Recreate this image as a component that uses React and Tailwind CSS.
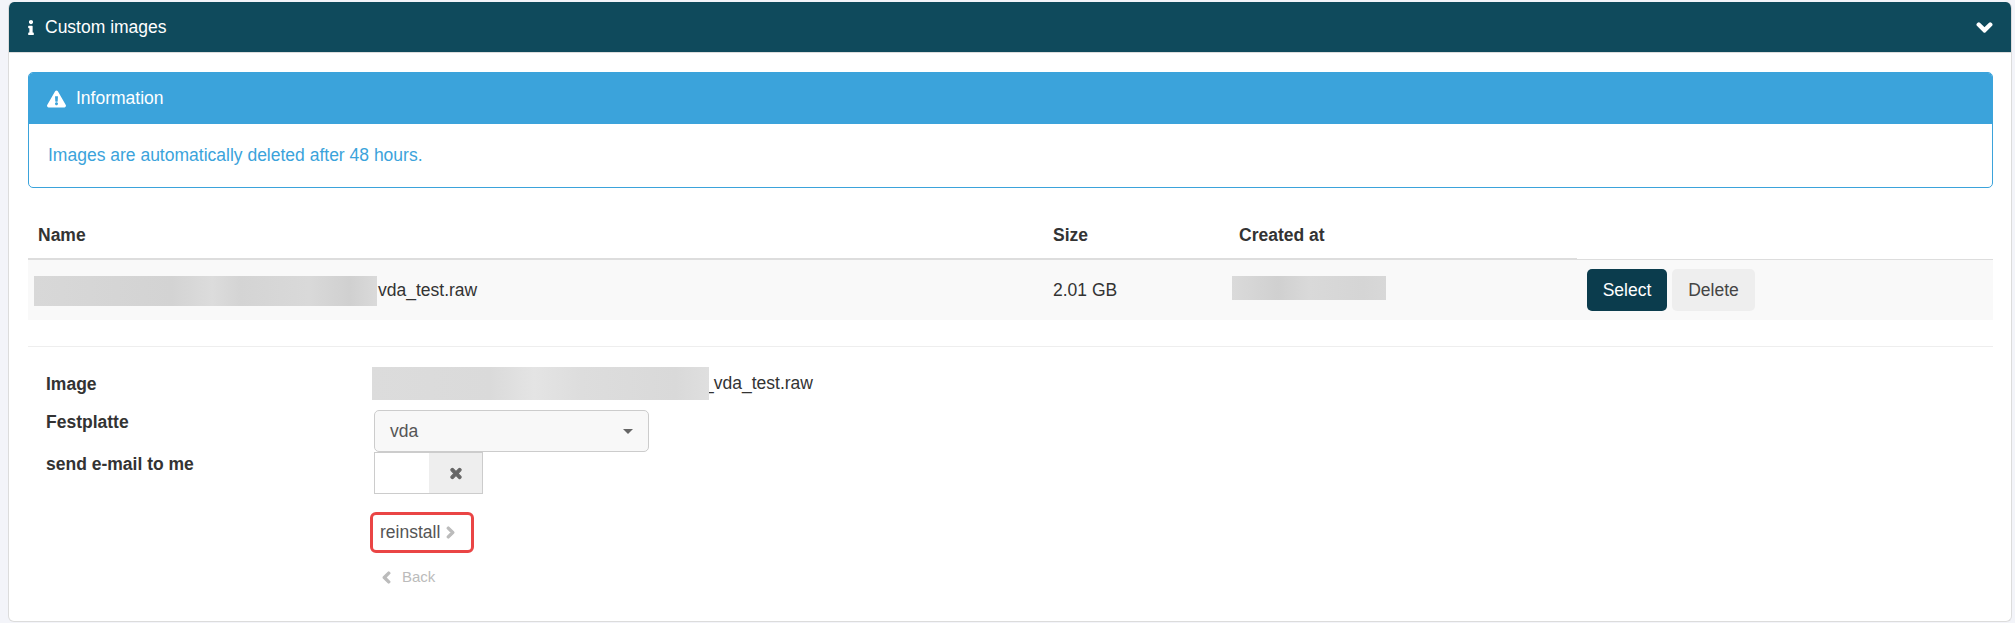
import React from 'react'
import { FaChevronDown, FaChevronLeft, FaChevronRight, FaExclamationTriangle, FaInfo, FaTimes } from 'react-icons/fa'

function App() {
  return (
    <div className="h-[623px] overflow-hidden bg-[#f3f4f9] pt-[2px] pr-[3px] pl-[8px] font-['Liberation_Sans',Arial,sans-serif] text-[17.5px] text-[#333]">
      <div className="h-[620px] overflow-hidden rounded-[6px] border-r border-b border-l border-[#dcdcdc] bg-white">
        {/* Panel header */}
        <div className="flex h-[51px] items-center justify-between border-b border-[#ddd] bg-[#0f4a5c] pr-[18px] pl-[18px] text-white">
          <div className="flex items-center">
            <FaInfo className="mr-[10px] h-[15px] w-[8px]" />
            <span>Custom images</span>
          </div>
          <FaChevronDown className="h-[17px] w-[17px]" stroke="currentColor" strokeWidth={50} />
        </div>

        <div className="pt-[19px] pr-[18px] pl-[19px]">
          {/* Information box */}
          <div className="overflow-hidden rounded-[5px] border border-[#3ba3db]">
            <div className="flex h-[51px] items-center bg-[#3ba3db] pl-[18px] text-white">
              <FaExclamationTriangle className="mr-[10px] h-[18px] w-[19px]" />
              <span>Information</span>
            </div>
            <div className="flex h-[63px] items-center pl-[19px] text-[#3ba3db]">
              Images are automatically deleted after 48 hours.
            </div>
          </div>

          {/* Images table */}
          <table className="mt-[23px] w-full table-fixed border-collapse">
            <thead>
              <tr className="h-[48px] text-left">
                <th className="w-[1015px] border-b-2 border-[#ddd] pt-[2px] pl-[10px] font-bold">Name</th>
                <th className="w-[187px] border-b-2 border-[#ddd] pt-[2px] pl-[10px] font-bold">Size</th>
                <th className="w-[347px] border-b-2 border-[#ddd] pt-[2px] pl-[9px] font-bold">Created at</th>
                <th className="border-b border-[#ddd]"></th>
              </tr>
            </thead>
            <tbody>
              <tr className="h-[61px] bg-[#f9f9f9]">
                <td className="pl-[6px]">
                  <div className="flex items-center">
                    <div className="mt-[2px] h-[30px] w-[343px] bg-[linear-gradient(90deg,#d8d8d8,#d3d3d3_40%,#dcdcdc_52%,#d4d4d4_60%,#d9d9d9_80%,#d0d0d0_92%,#dadada)]"></div>
                    <span className="pl-[1px]">vda_test.raw</span>
                  </div>
                </td>
                <td className="pl-[10px]">2.01 GB</td>
                <td className="pl-[2px]">
                  <div className="mb-[5px] h-[24px] w-[154px] bg-[linear-gradient(90deg,#dadada,#d0d0d0_30%,#d9d9d9_50%,#d5d5d5_85%,#d8d8d8)]"></div>
                </td>
                <td className="pl-[10px]">
                  <div className="flex gap-[5px]">
                    <button className="h-[42px] w-[80px] rounded-[5px] bg-[#0b3c4d] text-white">Select</button>
                    <button className="h-[42px] w-[83px] rounded-[5px] bg-[#eee] text-[#444]">Delete</button>
                  </div>
                </td>
              </tr>
            </tbody>
          </table>

          <div className="mt-[26px] border-t border-[#eee]"></div>

          {/* Reinstall form */}
          <div className="grid grid-cols-[328px_1fr] pt-[20px] pl-[18px]">
            <div className="flex flex-col pt-[4px] font-bold">
              <span className="h-[38px]">Image</span>
              <span className="h-[42px]">Festplatte</span>
              <span>send e-mail to me</span>
            </div>
            <div className="flex flex-col items-start">
              <div className="-ml-[2px] flex items-center">
                <div className="relative h-[33px] w-[337px] bg-[linear-gradient(90deg,#dcdcdc,#dadada_35%,#e4e4e4_48%,#dddddd_62%,#d9d9d9_90%,#dfdfdf)]"></div>
                <span className="-ml-[5px]">_vda_test.raw</span>
              </div>
              <div className="mt-[10px] flex h-[42px] w-[275px] items-center justify-between rounded-[5px] border border-[#ccc] bg-[#f8f8f8] pr-[15px] pl-[15px] text-[#555]">
                <span>vda</span>
                <span className="h-0 w-0 border-x-[5px] border-t-[5px] border-x-transparent border-t-[#666]"></span>
              </div>
              <div className="flex h-[42px] w-[109px] border border-[#ccc]">
                <div className="w-[54px] bg-white"></div>
                <div className="flex flex-1 items-center justify-center bg-[#eee] text-[#666]">
                  <FaTimes className="h-[15px] w-[14px]" stroke="currentColor" strokeWidth={40} />
                </div>
              </div>
              <div className="mt-[18px] -ml-[4px] flex h-[41px] w-[104px] items-center rounded-[6px] border-[3px] border-[#ea4545] pl-[7px] text-[#555]">
                <span>reinstall</span>
                <FaChevronRight className="ml-[5px] h-[13px] w-[11px] text-[#bbb]" stroke="currentColor" strokeWidth={50} />
              </div>
              <div className="mt-[13px] flex items-center pl-[7px] text-[15px] text-[#bbb]">
                <FaChevronLeft className="mr-[10px] h-[13px] w-[11px]" stroke="currentColor" strokeWidth={50} />
                <span>Back</span>
              </div>
            </div>
          </div>
        </div>
      </div>
    </div>
  )
}

export default App
